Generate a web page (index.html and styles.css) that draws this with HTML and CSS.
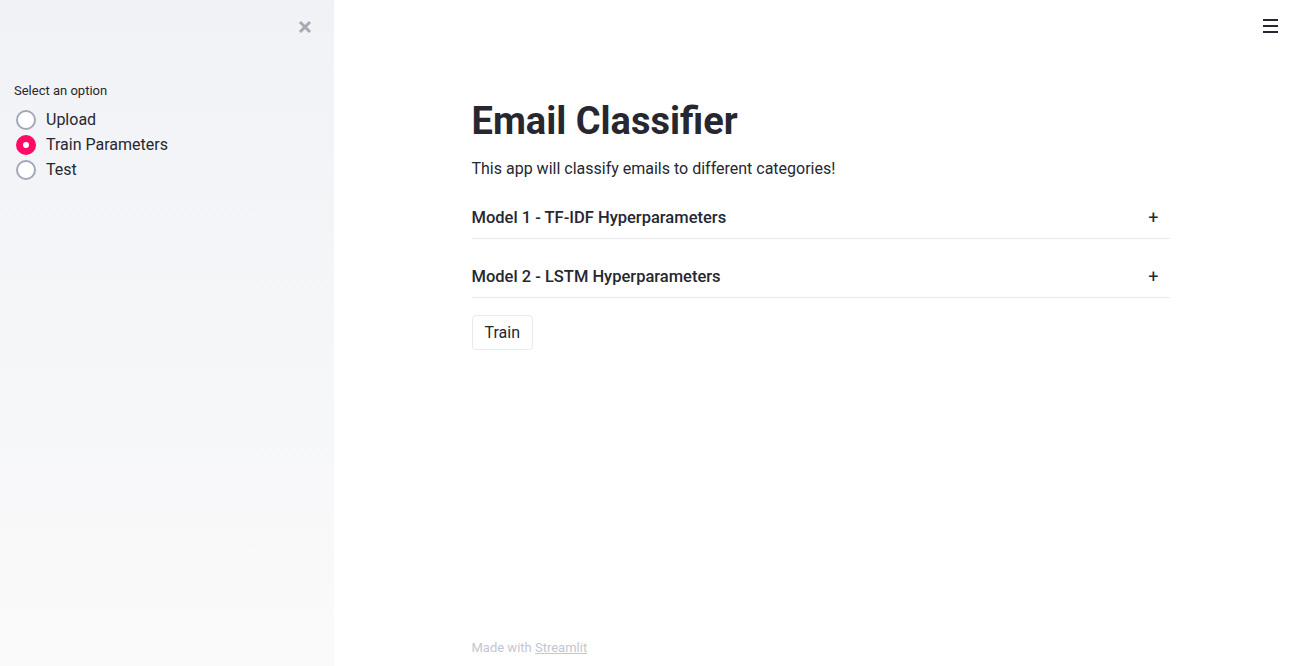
FILE: index.html
```html
<!DOCTYPE html>
<html>
<head>
<meta charset="utf-8">
<link rel="stylesheet" href="styles.css">
</head>
<body>
<div class="app">
  <aside class="sidebar">
    <div class="sidebar-top">
      <button class="close-btn" aria-label="Close sidebar">
        <svg width="14" height="14" viewBox="0 0 14 14"><path d="M2 2 L12 12 M12 2 L2 12" stroke="#a7aab5" stroke-width="3" stroke-linecap="butt"/></svg>
      </button>
    </div>
    <div class="widget">
      <div class="widget-label">Select an option</div>
      <div class="radio-group">
        <label class="radio"><span class="radio-dot"></span><span class="radio-text">Upload</span></label>
        <label class="radio selected"><span class="radio-dot"></span><span class="radio-text">Train Parameters</span></label>
        <label class="radio"><span class="radio-dot"></span><span class="radio-text">Test</span></label>
      </div>
    </div>
  </aside>
  <main class="main">
    <div class="toolbar">
      <button class="menu-btn" aria-label="Menu">
        <svg width="15" height="14" viewBox="0 0 15 14"><path d="M0 1h15M0 7h15M0 13h15" stroke="#262730" stroke-width="2"/></svg>
      </button>
    </div>
    <div class="content">
      <h1 class="title">Email Classifier</h1>
      <p class="lead">This app will classify emails to different categories!</p>
      <div class="expander">
        <span class="expander-title">Model 1 - TF-IDF Hyperparameters</span>
        <span class="expander-icon">+</span>
      </div>
      <div class="expander">
        <span class="expander-title">Model 2 - LSTM Hyperparameters</span>
        <span class="expander-icon">+</span>
      </div>
      <button class="btn">Train</button>
    </div>
    <footer class="footer">Made with <a href="#">Streamlit</a></footer>
  </main>
</div>
</body>
</html>
```

FILE: styles.css
```css
* { box-sizing: border-box; }
html, body { margin: 0; padding: 0; height: 100%; }
body {
  font-family: Roboto, "Noto Sans", sans-serif;
  color: #262730;
  background: #fff;
}
.app { display: flex; height: 666px; }
.sidebar {
  width: 334px;
  flex: none;
  background-image: linear-gradient(180deg, #f0f2f6, #fafafa);
  padding: 0 14px;
}
.sidebar-top {
  display: flex;
  justify-content: flex-end;
  padding-top: 20px;
  padding-right: 8px;
  height: 83px;
}
.close-btn {
  border: none; background: none; padding: 0; width: 14px; height: 14px;
  display: flex; align-items: center; justify-content: center;
}
.widget-label { font-size: 13px; line-height: 16px; margin-bottom: 8px; color: #262730; }
.radio-group { display: flex; flex-direction: column; }
.radio { display: flex; align-items: center; height: 25px; font-size: 16px; }
.radio-dot {
  width: 20px; height: 20px; border-radius: 50%;
  border: 2px solid #a3a8b8; background: #fff; margin: 0 10px 0 2px; flex: none;
}
.radio.selected .radio-dot { border: 7px solid #ff0a66; background: #fff; }
.radio.selected .radio-text { background: #f3f4f8; padding: 2px 8px 2px 0; }
.main { flex: 1; display: flex; flex-direction: column; }
.toolbar { display: flex; justify-content: flex-end; padding: 19px 29px 0 0; height: 50px; }
.menu-btn { border: none; background: none; padding: 0; display: flex; }
.content { width: 698px; margin: 0 auto; flex: 1; }
.title { font-size: 38px; font-weight: 700; margin: 48px 0 13px; line-height: 46px; }
.lead { font-size: 16px; margin: 0; line-height: 24px; }
.expander {
  display: flex; justify-content: space-between; align-items: center;
  height: 58px; padding-top: 16px; border-bottom: 1px solid #e6eaf1;
}
.expander + .expander { height: 59px; padding-top: 17px; }
.expander-title { font-size: 16.5px; font-weight: 500; }
.expander-icon { font-size: 18px; padding-right: 11px; }
.btn {
  font-family: inherit; font-size: 16px; color: #262730; background: #fff;
  border: 1px solid #e6eaf1; border-radius: 4px; padding: 6px 12px; height: 35px;
  margin-top: 17px;
}
.footer { width: 698px; margin: 0 auto; font-size: 13px; color: #c4c6d1; padding-bottom: 11px; }
.footer a { color: #c4c6d1; }
```
